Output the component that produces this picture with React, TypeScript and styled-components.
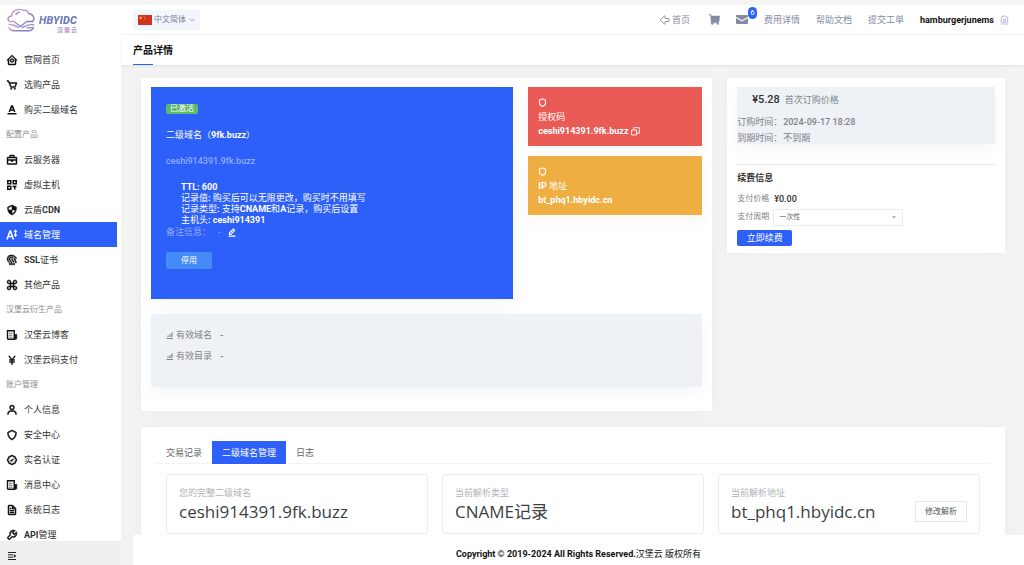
import React from 'react';
import styled, { createGlobalStyle, css } from 'styled-components';
import {
  BiHomeCircle, BiCart, BiBriefcase, BiShieldQuarter, BiFingerprint,
  BiCommand, BiYen, BiUser, BiShield, BiBadgeCheck, BiFile, BiWrench,
} from 'react-icons/bi';
import { ArrowBigLeft, ChevronDown, Shield } from 'lucide-react';

const BLUE = '#2d5ff9';

const GlobalStyle = createGlobalStyle`
  * { box-sizing: border-box; }
  body {
    margin: 0;
    background: #f2f2f2;
    color: #333;
    font: 9px/12px Roboto, "Noto Sans CJK SC", sans-serif;
  }
  button, select { font: inherit; margin: 0; cursor: pointer; }
  h1, h2, p, ul, dl, dd { margin: 0; padding: 0; font-size: inherit; }
  ul { list-style: none; }
  a { color: inherit; text-decoration: none; }
  b { font-weight: 700; }
`;

const Page = styled.div`
  display: flex;
  height: 100vh;
  padding-top: 5px;
  background: #f5f5f5;
  overflow: hidden;
`;

/* ---------- sidebar ---------- */

const Sidebar = styled.aside`
  display: flex;
  flex-direction: column;
  flex: 0 0 121px;
  background: #fff;
`;

const Logo = styled.a`
  display: flex;
  align-items: center;
  flex: 0 0 42px;
  gap: 4px;
  padding: 0 0 13px 7px;
`;

const LogoWords = styled.span`
  display: flex;
  flex-direction: column;
  align-items: flex-end;
  padding-top: 8px;
`;

const LogoName = styled.span`
  font: italic 900 11px/11px Roboto, sans-serif;
  color: transparent;
  background: linear-gradient(90deg, #7f86bd, #5f78b4);
  background-clip: text;
`;

const LogoSub = styled.span`
  display: flex;
  gap: 1px;
  font-size: 6px;
  line-height: 7px;
  font-weight: 700;
  color: #b592c6;
`;

const Menu = styled.ul`
  flex: 1;
  min-height: 0;
  overflow: hidden;
`;

const MenuGroup = styled.li`
  padding-left: 6px;
  font-size: 8px;
  line-height: 25px;
  color: #8c8c8c;
`;

const MenuLink = styled.a<{ $active?: boolean }>`
  display: flex;
  align-items: center;
  gap: 6px;
  height: 25px;
  margin-right: 4px;
  padding-left: 6px;
  color: #333;
  svg { width: 12px; height: 12px; color: #111; stroke: currentColor; stroke-width: 1; }
  ${(p) => p.$active && css`
    background: ${BLUE};
    color: #fff;
    svg { color: #fff; }
  `}
`;

const CollapseButton = styled.button`
  display: flex;
  align-items: center;
  flex: 0 0 24px;
  padding: 6px 0 0 7px;
  border: 0;
  background: #efefef;
  color: #222;
`;

/* ---------- top bars ---------- */

const Main = styled.main`
  display: flex;
  flex-direction: column;
  flex: 1;
  min-width: 0;
`;

const Header = styled.header`
  display: flex;
  align-items: center;
  justify-content: space-between;
  flex: 0 0 30px;
  padding: 0 15px 0 12px;
  background: #fff;
  border-bottom: 1px solid #f5f5f7;
`;

const Language = styled.button`
  display: flex;
  align-items: center;
  gap: 2px;
  height: 20px;
  padding: 0 4px 0 5px;
  border: 0;
  background: #f3f6fd;
  color: #7c8196;
  font-size: 8px;
`;

const TopNav = styled.nav`
  display: flex;
  align-items: center;
  gap: 16px;
  color: #868ba3;
`;

const TopLink = styled.a`
  position: relative;
  display: flex;
  align-items: center;
  gap: 1px;
`;

const HomeLink = styled(TopLink)`
  margin-right: 3px;
`;

const Badge = styled.span`
  position: absolute;
  top: -8px;
  left: 12px;
  width: 9px;
  border-radius: 5px;
  background: ${BLUE};
  color: #fff;
  font-size: 8px;
  line-height: 12px;
  text-align: center;
`;

const Account = styled(TopLink)`
  gap: 6px;
  color: #111;
  font-weight: 700;
`;

const TitleBar = styled.div`
  position: relative;
  flex: 0 0 30px;
  padding: 2px 0 0 12px;
  background: #fff;
  box-shadow: 0 1px 3px rgba(0, 0, 0, 0.08);
`;

const Title = styled.h1`
  color: #111;
  font-size: 10px;
  line-height: 28px;
  font-weight: 700;
  &::after {
    content: '';
    position: absolute;
    left: 12px;
    bottom: 0;
    width: 20px;
    height: 1px;
    background: ${BLUE};
  }
`;

/* ---------- content ---------- */

const Content = styled.div`
  display: flex;
  flex-direction: column;
  gap: 16px;
  flex: 1;
  min-height: 0;
  padding: 13px 19px 0 20px;
  overflow: hidden;
  background: #f3f3f3;
`;

const Columns = styled.div`
  display: grid;
  grid-template-columns: minmax(0, 37fr) minmax(0, 18fr);
  gap: 15px;
  align-items: start;
  flex: none;
`;

const Card = styled.section`
  padding: 9px 10px 24px;
  background: #fff;
  box-shadow: 0 0 15px rgba(0, 0, 0, 0.03);
`;

const RenewCard = styled(Card)`
  padding-bottom: 7px;
`;

const Overview = styled.div`
  display: grid;
  grid-template-columns: minmax(0, 25fr) minmax(0, 12fr);
  gap: 15px;
`;

const raised = css`
  box-shadow: 0 6px 15px rgba(0, 0, 0, 0.04);
`;

const Product = styled.div`
  padding: 17px 15px 30px;
  background: ${BLUE};
  color: #fff;
  ${raised}
`;

const Status = styled.span`
  display: block;
  width: 32px;
  border-radius: 2px;
  background: #5dbb6c;
  font-size: 8px;
  line-height: 10px;
  text-align: center;
`;

const ProductName = styled.h2`
  margin-top: 15px;
  font-weight: 400;
`;

const Muted = styled.p`
  color: #92abfc;
  font-weight: 500;
`;

const Domain = styled(Muted)`
  margin-top: 14px;
`;

const Specs = styled.ul`
  margin-top: 15px;
  padding-left: 15px;
  line-height: 11px;
`;

const Remark = styled(Muted)`
  display: flex;
  align-items: center;
  gap: 7px;
  font-weight: 400;
`;

const IconButton = styled.button`
  display: inline-flex;
  padding: 0;
  border: 0;
  background: none;
  color: #fff;
`;

const StopButton = styled.button`
  width: 46px;
  height: 17px;
  margin-top: 14px;
  padding: 0;
  border: 0;
  border-radius: 2px;
  background: #458bf7;
  color: #fff;
  font-size: 8px;
`;

const Tiles = styled.div`
  display: flex;
  flex-direction: column;
  gap: 10px;
`;

const Tile = styled.div<{ $color: string }>`
  padding: 11px 10px 8px;
  background: ${(p) => p.$color};
  color: #fff;
  line-height: 14px;
  ${raised}
  > svg { display: block; margin: 0 0 3px; }
`;

const TileValue = styled.p`
  display: flex;
  align-items: center;
  gap: 2px;
  font-weight: 700;
`;

const Usage = styled.ul`
  margin-top: 15px;
  padding: 11px 15px 20px;
  background: #eef1f6;
  color: #808489;
  line-height: 21px;
  ${raised}
`;

const UsageRow = styled.li`
  display: flex;
  align-items: center;
  gap: 2px;
  b { margin-left: 6px; }
`;

const OrderInfo = styled.dl`
  display: grid;
  grid-template-columns: 46px 1fr;
  row-gap: 4px;
  background: #eef1f6;
  color: #7d8188;
  b { font-weight: 500; }
  ${raised}
`;

const PriceRow = styled.div`
  grid-column: 1 / -1;
  display: flex;
  flex-direction: row-reverse;
  align-items: baseline;
  justify-content: flex-end;
  gap: 5px;
  padding: 7px 15px 6px;
  dd { color: #333; font-size: 11px; font-weight: 500; }
`;

const Renewal = styled.form`
  margin-top: 20px;
  padding-top: 7px;
  border-top: 1px solid #e3e4e6;
`;

const RenewTitle = styled.h2`
  margin-bottom: 6px;
  font-weight: 700;
`;

const Field = styled.div`
  display: flex;
  align-items: center;
  gap: 5px;
  height: 18px;
  color: #808489;
  font-size: 8px;
  b { color: #333; font-size: 9px; font-weight: 500; }
`;

const SelectBox = styled.span`
  position: relative;
  flex: 0 0 130px;
  margin-left: -1px;
  &::after {
    content: '';
    position: absolute;
    top: 7px;
    right: 7px;
    border: 2px solid transparent;
    border-top: 3px solid #b0b3b8;
    pointer-events: none;
  }
`;

const Select = styled.select`
  display: block;
  width: 100%;
  height: 17px;
  padding: 0 5px;
  border: 1px solid #ebecef;
  background: #fff;
  color: #666;
  font-size: 7px;
  appearance: none;
`;

const RenewButton = styled.button`
  width: 55px;
  height: 16px;
  margin-top: 4px;
  padding: 0;
  border: 0;
  border-radius: 2px;
  background: ${BLUE};
  color: #fff;
`;

const TabsCard = styled(Card)`
  flex: none;
  padding: 14px 15px 25px;
`;

const TabList = styled.div`
  display: flex;
  border-bottom: 1px solid #f3f3f4;
`;

const Tab = styled.button<{ $active?: boolean }>`
  height: 23px;
  margin-bottom: -1px;
  padding: 0 10px;
  border: 0;
  background: ${(p) => (p.$active ? BLUE : 'none')};
  color: ${(p) => (p.$active ? '#fff' : '#666')};
`;

const Panel = styled.div`
  display: grid;
  grid-template-columns: repeat(3, minmax(0, 1fr));
  gap: 14px;
  padding: 10px 10px 0;
`;

const Record = styled.div`
  padding: 12px 12px 10px;
  border: 1px solid #ececee;
  border-radius: 3px;
`;

const RecordLabel = styled.p`
  color: #b0b2b6;
  line-height: 13px;
`;

const RecordRow = styled.div`
  display: flex;
  align-items: center;
  justify-content: space-between;
  height: 23px;
`;

const RecordValue = styled.p`
  color: #3c3f43;
  font: 17px/23px "Open Sans", "Noto Sans CJK SC", sans-serif;
`;

const EditButton = styled.button`
  width: 52px;
  height: 21px;
  padding: 0;
  border: 1px solid #e6e7ea;
  background: #fff;
  color: #555;
  font-size: 8px;
`;

const FooterWrap = styled.div`
  flex: none;
  padding-left: 12px;
  background: #f3f3f3;
`;

const Footer = styled.footer`
  padding: 13px 0 5px;
  background: #fff;
  color: #111;
  text-align: center;
`;

/* ---------- drawings ---------- */

const LogoMark = () => (
  <svg width="28" height="24" viewBox="0 0 28 24" fill="none" stroke="url(#lg)" strokeWidth="1.4" strokeLinecap="round">
    <defs>
      <linearGradient id="lg" x1="0" y1="0" x2="1" y2="1">
        <stop offset="0" stopColor="#d4a3cf" />
        <stop offset="1" stopColor="#6f7cba" />
      </linearGradient>
    </defs>
    <path d="M2.500 13.500C0 12 .8 8.300 4.500 8 5 2.500 11 0 16 2.200 19 1.800 21 3.500 21.500 5.500 26 5.500 28.500 11 25.500 13.500H19.500" />
    <path d="M9 6.500C9.500 5 11 4.200 12.500 4.200" />
    <path d="M2.500 13.500H7L13.500 18.500 19.500 13.500" />
    <path d="M2 16.500C5 16.200 8.500 17.500 11.500 19.500M15.500 19.500C19 17.200 23 16.200 26.500 16.800" />
    <path d="M2 19.800C3 22.300 5 22.800 7 22.800H21C23.500 22.800 25.500 22.300 26.500 19.800H20" />
    <path d="M2 19.800H8" />
  </svg>
);

const ConeIcon = () => (
  <svg viewBox="0 0 24 24" fill="none" style={{ strokeWidth: 3 }}>
    <path d="M6.500 16 11.200 4h1.600l4.700 12M8 12h8M3 19.500h18" />
  </svg>
);

const HostIcon = () => (
  <svg viewBox="0 0 24 24" fill="none" style={{ strokeWidth: 3 }}>
    <path d="M3.500 3.500h6v6h-6zM14.500 3.500h6v6h-6zM3.500 14.500h6v6h-6zM13 15h8M17.500 13v8" />
  </svg>
);

const DnsIcon = () => (
  <svg viewBox="0 0 24 24" fill="none" style={{ strokeWidth: 3 }}>
    <path d="M2 21 8 4h1l6 17M4.500 15h8" />
    <path d="M19 3v11M16.500 5.500 19 3l2.500 2.500M16.500 11.500 19 14l2.500-2.500" style={{ strokeWidth: 2.5 }} />
  </svg>
);

const NewsIcon = () => (
  <svg viewBox="0 0 24 24" fill="none" style={{ strokeWidth: 2.8 }}>
    <path d="M3 3.500h13.500V20.500H4.500a1.500 1.500 0 0 1-1.500-1.500z" />
    <path d="M17 11h4.500v7.500a2 2 0 0 1-2 2H17z" fill="currentColor" style={{ strokeWidth: 1.5 }} />
    <path d="M6 8.500h7M6 12.500h7M6 16.500h7" style={{ strokeWidth: 1.2 }} />
  </svg>
);

const CollapseIcon = () => (
  <svg width="10" height="8" viewBox="0 0 10 8" fill="none" stroke="currentColor">
    <path d="M1 .5h8M1 2.800h5M1 5.200h5M1 7.500h8" />
    <path d="M6.800 2 9.300 4 6.800 6z" fill="currentColor" stroke="none" />
  </svg>
);

const Flag = () => (
  <svg width="14" height="10" viewBox="0 0 14 10">
    <path fill="#d0321f" d="M0 0h14v10H0z" />
    <path fill="#f6c33c" d="m2.700 1 .5 1.200 1.300.1-1 .8.3 1.300-1.100-.7-1.100.7.3-1.300-1-.8 1.300-.1zM5.500.8h.9v.8h-.9zM6.500 2h.8v.8h-.8zM6.300 3.500h.8v.8h-.8z" />
  </svg>
);

const CartIcon = () => (
  <svg width="11" height="11" viewBox="0 0 11 11" fill="currentColor">
    <path d="M0 .3h2.200l.3 1.400H11L10.200 8H3.200v.3H10v1H2L1.400 1.300H0z" />
    <circle cx="3.300" cy="9.700" r="1.100" /><circle cx="8.800" cy="9.700" r="1.100" />
  </svg>
);

const MailIcon = () => (
  <svg width="12" height="9" viewBox="0 0 12 9" fill="currentColor">
    <path d="M1 0h10a1 1 0 0 1 1 1v.7L6 5.200 0 1.700V1a1 1 0 0 1 1-1zM0 2.900l6 3.500 6-3.500V8a1 1 0 0 1-1 1H1a1 1 0 0 1-1-1z" />
  </svg>
);

const AvatarIcon = () => (
  <svg width="9" height="10" viewBox="0 0 9 10" fill="none" stroke="#b9b9da" strokeWidth="1">
    <path d="M1.300 7V4a3.200 3.200 0 0 1 6.400 0v3M.5 7h8M1 9h7M3 4.500h3M3 6h3" />
  </svg>
);

const EditIcon = () => (
  <svg width="8" height="9" viewBox="0 0 8 9" fill="none" stroke="currentColor">
    <path d="M1.500 6.300V4.800L5.300 1l1.300 1.300-3.800 4zM.5 8.200h7" strokeWidth="1.200" />
  </svg>
);

const CopyIcon = () => (
  <svg width="9" height="9" viewBox="0 0 9 9" fill="none" stroke="currentColor" strokeWidth="0.9">
    <path d="M.6 3h5v5h-5zM2.800 3V.7h5.500v5.500H5.600" />
  </svg>
);

const BarsIcon = () => (
  <svg width="8" height="8" viewBox="0 0 8 8" fill="none" stroke="currentColor">
    <path d="M.5 6.500h6.500M2 5V3.500M4 5V2.300M6 5V.5" strokeWidth="1.200" />
  </svg>
);

/* ---------- data ---------- */

type Entry = { text: React.ReactNode; icon?: React.ReactNode; active?: boolean };

const entries: Entry[] = [
  { text: '官网首页', icon: <BiHomeCircle /> },
  { text: '选购产品', icon: <BiCart /> },
  { text: '购买二级域名', icon: <ConeIcon /> },
  { text: '配置产品' },
  { text: '云服务器', icon: <BiBriefcase /> },
  { text: '虚拟主机', icon: <HostIcon /> },
  { text: <span>云盾<b>CDN</b></span>, icon: <BiShieldQuarter /> },
  { text: '域名管理', icon: <DnsIcon />, active: true },
  { text: <span><b>SSL</b>证书</span>, icon: <BiFingerprint /> },
  { text: '其他产品', icon: <BiCommand /> },
  { text: '汉堡云衍生产品' },
  { text: '汉堡云博客', icon: <NewsIcon /> },
  { text: '汉堡云码支付', icon: <BiYen /> },
  { text: '账户管理' },
  { text: '个人信息', icon: <BiUser /> },
  { text: '安全中心', icon: <BiShield /> },
  { text: '实名认证', icon: <BiBadgeCheck /> },
  { text: '消息中心', icon: <NewsIcon /> },
  { text: '系统日志', icon: <BiFile /> },
  { text: <span><b>API</b>管理</span>, icon: <BiWrench /> },
];

export default function App() {
  return (
    <Page>
      <GlobalStyle />
      <Sidebar>
        <Logo href="#">
          <LogoMark />
          <LogoWords>
            <LogoName>HBYIDC</LogoName>
            <LogoSub><span>汉</span><span>堡</span><span>云</span></LogoSub>
          </LogoWords>
        </Logo>
        <Menu>
          {entries.map((e, i) =>
            e.icon ? (
              <li key={i}>
                <MenuLink href="#" $active={e.active}>{e.icon}{e.text}</MenuLink>
              </li>
            ) : (
              <MenuGroup key={i}>{e.text}</MenuGroup>
            ),
          )}
        </Menu>
        <CollapseButton aria-label="收起菜单"><CollapseIcon /></CollapseButton>
      </Sidebar>

      <Main>
        <Header>
          <Language><Flag />中文简体<ChevronDown size={8} strokeWidth={2} /></Language>
          <TopNav>
            <HomeLink href="#"><ArrowBigLeft size={12} strokeWidth={2} />首页</HomeLink>
            <TopLink href="#" aria-label="购物车"><CartIcon /></TopLink>
            <TopLink href="#" aria-label="消息"><MailIcon /><Badge>6</Badge></TopLink>
            <TopLink href="#">费用详情</TopLink>
            <TopLink href="#">帮助文档</TopLink>
            <TopLink href="#">提交工单</TopLink>
            <Account href="#">hamburgerjunems<AvatarIcon /></Account>
          </TopNav>
        </Header>
        <TitleBar><Title>产品详情</Title></TitleBar>

        <Content>
          <Columns>
            <Card>
              <Overview>
                <Product>
                  <Status>已激活</Status>
                  <ProductName>二级域名（<b>9fk.buzz</b>）</ProductName>
                  <Domain>ceshi914391.9fk.buzz</Domain>
                  <Specs>
                    <li><b>TTL: 600</b></li>
                    <li>记录值<b>:</b> 购买后可以无限更改，购买时不用填写</li>
                    <li>记录类型<b>:</b> 支持<b>CNAME</b>和<b>A</b>记录，购买后设置</li>
                    <li>主机头<b>: ceshi914391</b></li>
                  </Specs>
                  <Remark>
                    <span>备注信息：</span>
                    <span>-</span>
                    <IconButton aria-label="编辑备注"><EditIcon /></IconButton>
                  </Remark>
                  <StopButton>停用</StopButton>
                </Product>
                <Tiles>
                  <Tile $color="#ea5b56">
                    <Shield size={9} strokeWidth={3} />
                    <p>授权码</p>
                    <TileValue>
                      ceshi914391.9fk.buzz
                      <IconButton aria-label="复制"><CopyIcon /></IconButton>
                    </TileValue>
                  </Tile>
                  <Tile $color="#eeae41">
                    <Shield size={9} strokeWidth={3} />
                    <p><b>IP</b> 地址</p>
                    <TileValue>bt_phq1.hbyidc.cn</TileValue>
                  </Tile>
                </Tiles>
              </Overview>
              <Usage>
                <UsageRow><BarsIcon />有效域名<b>-</b></UsageRow>
                <UsageRow><BarsIcon />有效目录<b>-</b></UsageRow>
              </Usage>
            </Card>

            <RenewCard>
              <OrderInfo>
                <PriceRow><dt>首次订购价格</dt><dd>¥5.28</dd></PriceRow>
                <dt>订购时间：</dt><dd><b>2024-09-17 18:28</b></dd>
                <dt>到期时间：</dt><dd>不到期</dd>
              </OrderInfo>
              <Renewal>
                <RenewTitle>续费信息</RenewTitle>
                <Field><span>支付价格</span><b>¥0.00</b></Field>
                <Field>
                  <label htmlFor="cycle">支付周期</label>
                  <SelectBox><Select id="cycle"><option>一次性</option></Select></SelectBox>
                </Field>
                <RenewButton type="button">立即续费</RenewButton>
              </Renewal>
            </RenewCard>
          </Columns>

          <TabsCard>
            <TabList role="tablist">
              <Tab role="tab">交易记录</Tab>
              <Tab role="tab" aria-selected $active>二级域名管理</Tab>
              <Tab role="tab">日志</Tab>
            </TabList>
            <Panel role="tabpanel">
              <Record>
                <RecordLabel>您的完整二级域名</RecordLabel>
                <RecordRow><RecordValue>ceshi914391.9fk.buzz</RecordValue></RecordRow>
              </Record>
              <Record>
                <RecordLabel>当前解析类型</RecordLabel>
                <RecordRow><RecordValue>CNAME记录</RecordValue></RecordRow>
              </Record>
              <Record>
                <RecordLabel>当前解析地址</RecordLabel>
                <RecordRow>
                  <RecordValue>bt_phq1.hbyidc.cn</RecordValue>
                  <EditButton>修改解析</EditButton>
                </RecordRow>
              </Record>
            </Panel>
          </TabsCard>
        </Content>
        <FooterWrap>
          <Footer><b>Copyright © 2019-2024 All Rights Reserved.</b>汉堡云 版权所有</Footer>
        </FooterWrap>
      </Main>
    </Page>
  );
}
